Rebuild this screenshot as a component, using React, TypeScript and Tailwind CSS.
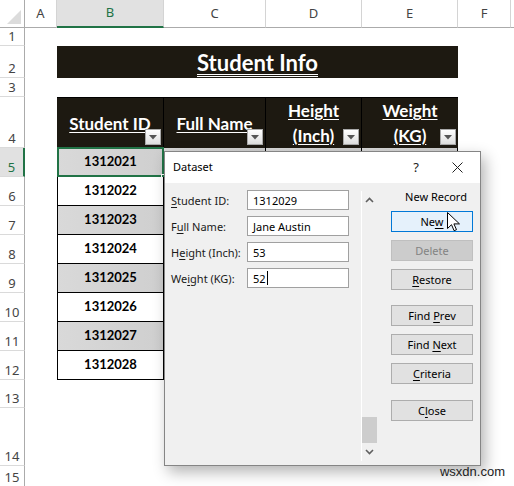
import React from "react";

const sheetFont = { fontFamily: "Lato, 'Open Sans', sans-serif" };
const uiFont = { fontFamily: "'Noto Sans', 'Open Sans', sans-serif" };

const heights = [18, 32, 19, 51, 29, 29, 29, 29, 29, 29, 29, 29, 28, 58, 21];
const ids = ["1312021", "1312022", "1312023", "1312024", "1312025", "1312026", "1312027", "1312028"];

function FilterBtn() {
  return (
    <div className="absolute right-[2px] bottom-[3px] w-[16px] h-[16px] border border-[#a9a9a9] bg-gradient-to-b from-white to-[#dedede] flex items-center justify-center">
      <svg width="8" height="5" viewBox="0 0 8 5">
        <path d="M0 0h8L4 4.5z" fill="#555" />
      </svg>
    </div>
  );
}

function RowHead({ n, h, selected }: { n: number; h: number; selected?: boolean }) {
  return (
    <div
      style={{ height: h }}
      className={`w-[25px] shrink-0 flex items-end justify-center pb-[2px] text-[13px] leading-none text-[#444] border-b border-[#dadada] ${
        selected ? "bg-[#e1e1e1] border-r-2 border-r-[#217346] text-[#217346]" : "border-r border-r-[#ababab]"
      }`}
    >
      <span style={uiFont}>{n}</span>
    </div>
  );
}

function U({ children }: { children: React.ReactNode }) {
  return <span className="underline underline-offset-2">{children}</span>;
}

function Field({ label, value, caret }: { label: React.ReactNode; value: string; caret?: boolean }) {
  return (
    <div className="flex items-center h-[20px]">
      <div className="w-[76px] shrink-0 whitespace-nowrap text-[11px] text-[#1a1a1a] leading-none">{label}</div>
      <div className="w-[102px] h-[20px] bg-white border border-[#a0a0a0] flex items-center pl-[5px] text-[11px] text-black leading-none">
        <span>{value}</span>
        {caret && <span className="inline-block w-[1px] h-[14px] bg-black ml-[1px]" />}
      </div>
    </div>
  );
}

function Btn({ children, state }: { children: React.ReactNode; state?: "hot" | "off" }) {
  const cls =
    state === "hot"
      ? "bg-[#e5f1fb] border-[#0078d7] text-black"
      : state === "off"
      ? "bg-[#cccccc] border-[#bfbfbf] text-[#838383]"
      : "bg-[#e1e1e1] border-[#adadad] text-black";
  return (
    <div className={`w-[82px] h-[21px] border flex items-center justify-center text-[11px] leading-none ${cls}`}>
      <span className="whitespace-pre">{children}</span>
    </div>
  );
}

function Dialog() {
  return (
    <div
      style={uiFont}
      className="absolute left-[164px] top-[151px] w-[317px] h-[315px] border border-[#858585] bg-[#f0f0f0] shadow-[4px_6px_14px_rgba(0,0,0,0.3)] flex flex-col"
    >
      <div className="h-[31px] bg-white flex items-center pl-[8px] shrink-0">
        <span className="text-[11px] text-black">Dataset</span>
        <span className="ml-auto text-[13px] text-[#222] mr-[33px]">?</span>
        <svg width="11" height="11" viewBox="0 0 11 11" className="mr-[17px]">
          <path d="M0.5 0.5l10 10M10.5 0.5l-10 10" stroke="#222" strokeWidth="1" />
        </svg>
      </div>
      <div className="flex flex-1">
        <div className="w-[196px] pl-[6px] pt-[7px] flex flex-col gap-[6px]">
          <Field label={<><U>S</U>tudent ID:</>} value="1312029" />
          <Field label={<>F<U>u</U>ll Name:</>} value="Jane Austin" />
          <Field label={<>H<U>e</U>ight (Inch):</>} value="53" />
          <Field label={<>We<U>i</U>ght (KG):</>} value="52" caret />
        </div>
        <div className="w-[16px] mt-[8px] mb-[4px] border-l border-white flex flex-col items-center">
          <svg width="9" height="6" viewBox="0 0 9 6" className="mt-[6px]">
            <path d="M1 5l3.5-3.5L8 5" stroke="#606060" strokeWidth="1.6" fill="none" />
          </svg>
          <div className="flex-1" />
          <div className="w-[15px] h-[26px] bg-[#cdcdcd]" />
          <svg width="9" height="6" viewBox="0 0 9 6" className="mt-[6px] mb-[6px]">
            <path d="M1 1l3.5 3.5L8 1" stroke="#606060" strokeWidth="1.6" fill="none" />
          </svg>
        </div>
        <div className="ml-[14px] pt-[8px] flex flex-col items-center">
          <div className="text-[11px] leading-none text-black h-[14px] mb-[6px] pl-[8px]">New Record</div>
          <div className="flex flex-col gap-[8px]">
            <div className="relative">
              <Btn state="hot">Ne<U>w</U></Btn>
              <svg width="13" height="20" viewBox="0 0 13 20" className="absolute left-[56px] top-[1px]">
                <path d="M0.5 0.5v16l4-3.8 2.6 6 2.4-1-2.6-5.8h5.6z" fill="white" stroke="black" strokeWidth="1" strokeLinejoin="round" />
              </svg>
            </div>
            <Btn state="off">Delete</Btn>
            <Btn><U>R</U>estore</Btn>
          </div>
          <div className="flex flex-col gap-[8px] mt-[15px]">
            <Btn>Find <U>P</U>rev</Btn>
            <Btn>Find <U>N</U>ext</Btn>
            <Btn><U>C</U>riteria</Btn>
          </div>
          <div className="mt-[16px]">
            <Btn>C<U>l</U>ose</Btn>
          </div>
        </div>
      </div>
    </div>
  );
}

export default function App() {
  const colHeads = [
    { l: "A", w: 32 },
    { l: "B", w: 107, sel: true },
    { l: "C", w: 102 },
    { l: "D", w: 96 },
    { l: "E", w: 96 },
    { l: "F", w: 53 },
  ];
  return (
    <div className="relative w-[514px] h-[486px] overflow-hidden bg-white">
      {/* column headers */}
      <div className="flex h-[28px]" style={uiFont}>
        <div className="w-[25px] shrink-0 border-r border-b border-[#ababab] relative">
          <svg width="14" height="14" viewBox="0 0 14 14" className="absolute right-[3px] bottom-[3px]">
            <path d="M14 0V14H0z" fill="#dcdcdc" />
          </svg>
        </div>
        {colHeads.map((c) => (
          <div
            key={c.l}
            style={{ width: c.w }}
            className={`shrink-0 flex items-center justify-center text-[13px] border-r border-r-[#d4d4d4] ${
              c.sel ? "bg-[#e1e1e1] border-b-2 border-b-[#217346] text-[#217346]" : "border-b border-b-[#ababab] text-[#444]"
            }`}
          >
            {c.l}
          </div>
        ))}
        <div className="flex-1 border-b border-[#ababab]" />
      </div>

      {heights.map((h, i) => {
        const n = i + 1;
        const dataIdx = n - 5;
        return (
          <div key={n} className="flex" style={{ height: h }}>
            <RowHead n={n} h={h} selected={n === 5} />
            <div className="w-[32px] shrink-0" />
            {n === 2 && (
              <div
                style={sheetFont}
                className="w-[401px] shrink-0 bg-[#1d1911] flex items-center justify-center text-white font-bold text-[22px]"
              >
                <span className="underline decoration-double decoration-1 underline-offset-[3px]">Student Info</span>
              </div>
            )}
            {n === 4 && (
              <div style={sheetFont} className="flex bg-[#1d1911] border-t border-black text-white font-bold text-[17px] leading-[25px]">
                <div className="relative w-[107px] border-r border-black flex items-center justify-center">
                  <U>Student ID</U>
                  <FilterBtn />
                </div>
                <div className="relative w-[102px] border-r border-black flex items-center justify-center">
                  <U>Full Name</U>
                  <FilterBtn />
                </div>
                <div className="relative w-[96px] border-r border-black flex flex-col items-center justify-center">
                  <U>Height</U>
                  <U>(Inch)</U>
                  <FilterBtn />
                </div>
                <div className="relative w-[96px] flex flex-col items-center justify-center">
                  <U>Weight</U>
                  <U>(KG)</U>
                  <FilterBtn />
                </div>
              </div>
            )}
            {dataIdx >= 0 && dataIdx < ids.length && (
              <div style={sheetFont} className="flex text-[13px] font-bold text-black">
                {[107, 102, 96, 96].map((w, j) => (
                  <div
                    key={j}
                    style={{ width: w }}
                    className={`relative shrink-0 border-b border-r border-black flex items-center justify-center ${
                      j === 0 ? "border-l" : ""
                    } ${dataIdx % 2 === 0 ? "bg-gradient-to-r from-[#d9d9d9] to-[#cfcfcf]" : "bg-white"}`}
                  >
                    {j === 0 && ids[dataIdx]}
                    {j === 0 && dataIdx === 0 && (
                      <>
                        <div className="absolute -left-[1px] -top-[1px] -right-[1px] -bottom-[1px] border-2 border-[#217346]" />
                        <div className="absolute -right-[3px] -bottom-[3px] w-[5px] h-[5px] bg-[#217346] border border-white" />
                      </>
                    )}
                  </div>
                ))}
              </div>
            )}
          </div>
        );
      })}

      <Dialog />

      <div className="absolute right-[9px] bottom-[5px] text-[13px] text-[#222]" style={{ fontFamily: "'Liberation Sans', Arial, sans-serif" }}>
        wsxdn.com
      </div>
    </div>
  );
}
